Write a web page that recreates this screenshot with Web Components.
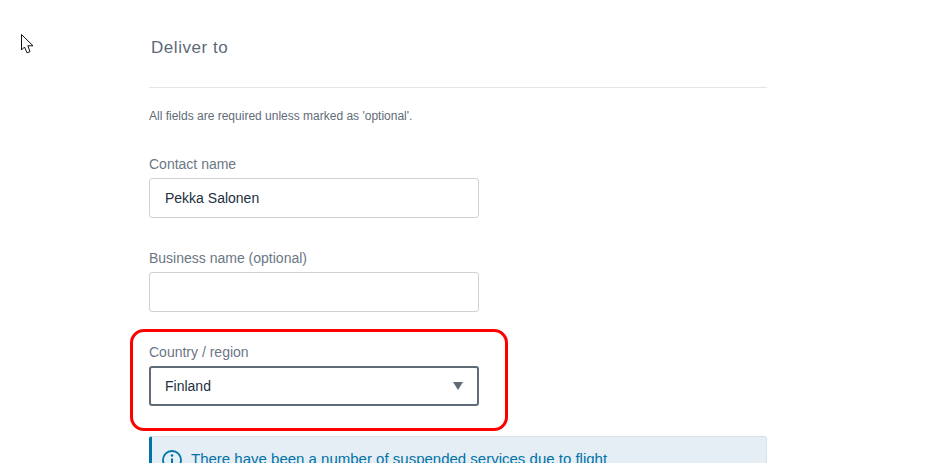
<!DOCTYPE html>
<html lang="en">
<head>
<meta charset="utf-8">
<title>Deliver to</title>
<style>
  html, body { margin: 0; height: 100%; overflow: hidden; background: #fff; }
  body { position: relative; font-family: "Liberation Sans", Arial, sans-serif; }
</style>
</head>
<body>
<delivery-form>
  <form-field label="Contact name"><text-box value="Pekka Salonen"></text-box></form-field>
  <form-field label="Business name (optional)"><text-box></text-box></form-field>
  <form-field label="Country / region"><select-box value="Finland"></select-box></form-field>
  <info-notice>There have been a number of suspended services due to flight</info-notice>
</delivery-form>
<highlight-ring></highlight-ring>
<mouse-cursor></mouse-cursor>

<script>
class DeliveryForm extends HTMLElement {
  constructor() {
    super();
    this.attachShadow({ mode: 'open' });
    this.shadowRoot.innerHTML = `
      <style>
        :host { display: block; width: 618px; margin-left: 149px; }
        h2 {
          margin: 0;
          height: 88px;
          box-sizing: border-box;
          padding: 39px 0 0 2px;
          border-bottom: 1px solid #e3e5e8;
          font-size: 17px;
          line-height: 18px;
          font-weight: 400;
          letter-spacing: 0.55px;
          color: #5d6978;
        }
        p {
          margin: 0;
          padding-top: 21px;
          height: 36px;
          font-size: 12px;
          line-height: 14px;
          color: #5f6b78;
        }
        .fields { display: flex; flex-direction: column; gap: 32px; padding-top: 11px; }
      </style>
      <h2>Deliver to</h2>
      <p>All fields are required unless marked as 'optional'.</p>
      <div class="fields"><slot></slot></div>
    `;
  }
}

class FormField extends HTMLElement {
  constructor() {
    super();
    this.attachShadow({ mode: 'open' });
    this.shadowRoot.innerHTML = `
      <style>
        :host { display: block; }
        label { display: block; height: 22px; font-size: 14px; line-height: 16px; color: #6b7785; }
      </style>
      <label></label>
      <slot></slot>
    `;
    this.shadowRoot.querySelector('label').textContent = this.getAttribute('label');
  }
}

class TextBox extends HTMLElement {
  constructor() {
    super();
    this.attachShadow({ mode: 'open' });
    this.shadowRoot.innerHTML = `
      <style>
        :host {
          display: block;
          width: 330px;
          height: 40px;
          box-sizing: border-box;
          padding: 0 15px;
          border: 1px solid #cfd2d4;
          border-radius: 3px;
          background: #fff;
          font-size: 14px;
          line-height: 38px;
          color: #232f3e;
        }
      </style>
      <span></span>
    `;
    this.shadowRoot.querySelector('span').textContent = this.getAttribute('value') || '';
  }
}

class SelectBox extends HTMLElement {
  constructor() {
    super();
    this.attachShadow({ mode: 'open' });
    this.shadowRoot.innerHTML = `
      <style>
        :host {
          display: flex;
          align-items: center;
          justify-content: space-between;
          width: 330px;
          height: 40px;
          box-sizing: border-box;
          padding: 0 14px;
          border: 2px solid #5f6b76;
          border-radius: 3px;
          background: #fff;
          font-size: 14px;
          color: #232f3e;
        }
        svg { display: block; width: 10px; height: 8px; }
      </style>
      <span></span>
      <svg viewBox="0 0 10 8"><path d="M0 0h10L5 8z" fill="#5f6b76"/></svg>
    `;
    this.shadowRoot.querySelector('span').textContent = this.getAttribute('value') || '';
  }
}

class InfoNotice extends HTMLElement {
  constructor() {
    super();
    this.attachShadow({ mode: 'open' });
    this.shadowRoot.innerHTML = `
      <style>
        :host {
          display: flex;
          gap: 9px;
          align-items: flex-start;
          box-sizing: border-box;
          height: 60px;
          margin-top: -2px;
          padding: 12px 12px 0 10px;
          border: 1px solid #d5e0e8;
          border-left: 3px solid #0073a8;
          border-radius: 3px;
          background: #e6eef5;
          font-size: 15px;
          line-height: 20px;
          color: #0073a8;
        }
        svg { flex: none; width: 20px; height: 20px; margin-top: 1px; }
      </style>
      <svg viewBox="0 0 20 20" fill="none" stroke="#0073a8">
        <circle cx="10" cy="10" r="9" stroke-width="1.8"/>
        <path d="M10 8.5v6.5" stroke-width="2"/>
        <circle cx="10" cy="5.5" r="1.3" fill="#0073a8" stroke="none"/>
      </svg>
      <span><slot></slot></span>
    `;
  }
}

class HighlightRing extends HTMLElement {
  constructor() {
    super();
    this.attachShadow({ mode: 'open' });
    this.shadowRoot.innerHTML = `
      <style>
        :host {
          position: absolute;
          left: 130px;
          top: 329px;
          width: 378px;
          height: 102px;
          box-sizing: border-box;
          border: 3px solid #f00;
          border-radius: 14px;
          pointer-events: none;
        }
      </style>
    `;
  }
}

class MouseCursor extends HTMLElement {
  constructor() {
    super();
    this.attachShadow({ mode: 'open' });
    this.shadowRoot.innerHTML = `
      <style>
        :host { position: absolute; left: 21px; top: 34px; width: 13px; height: 20px; }
        svg { display: block; }
      </style>
      <svg width="13" height="20" viewBox="0 0 13 20">
        <path d="M.5.5V16l3-3 2.5 5.8 3-1.2L6.8 11.8H12z" fill="#fff" stroke="#111" stroke-width="1"/>
      </svg>
    `;
  }
}

customElements.define('delivery-form', DeliveryForm);
customElements.define('form-field', FormField);
customElements.define('text-box', TextBox);
customElements.define('select-box', SelectBox);
customElements.define('info-notice', InfoNotice);
customElements.define('highlight-ring', HighlightRing);
customElements.define('mouse-cursor', MouseCursor);
</script>
</body>
</html>
